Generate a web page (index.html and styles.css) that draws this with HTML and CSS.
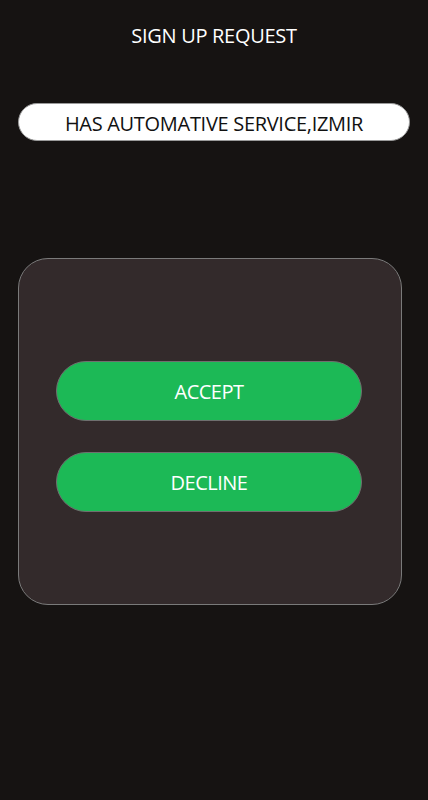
FILE: index.html
```html
<!DOCTYPE html>
<html>
<head>
<meta charset="utf-8">
<link rel="stylesheet" href="styles.css">
</head>
<body>
<div class="screen">
  <h1 class="title">SIGN UP REQUEST</h1>
  <div class="field">HAS AUTOMATIVE SERVICE,IZMIR</div>
  <div class="card">
    <button class="btn">ACCEPT</button>
    <button class="btn">DECLINE</button>
  </div>
</div>
</body>
</html>
```
FILE: styles.css
```css
html, body {
  margin: 0;
  padding: 0;
  background: #161312;
}
body {
  font-family: "Open Sans", "Noto Sans", sans-serif;
  width: 428px;
  height: 800px;
}
.screen {
  display: flex;
  flex-direction: column;
  padding: 0 18px;
}
.title {
  margin: 22px 0 0;
  font-size: 20px;
  font-weight: 400;
  color: #ffffff;
  text-align: center;
  line-height: 28px;
  letter-spacing: -0.3px;
}
.field {
  margin-top: 53px;
  height: 38px;
  box-sizing: border-box;
  border: 1px solid #9a9a9a;
  border-radius: 19px;
  background: #ffffff;
  color: #111;
  font-size: 20px;
  line-height: 36px;
  padding-top: 2px;
  text-align: center;
  letter-spacing: -0.3px;
}
.card {
  margin-top: 117px;
  width: 384px;
  height: 347px;
  box-sizing: border-box;
  background: #332a2b;
  border: 1px solid #7a7a7a;
  border-radius: 30px;
  display: flex;
  flex-direction: column;
  align-items: center;
  padding: 102px 0 0 0;
  gap: 31px;
}
.btn {
  width: 306px;
  height: 60px;
  margin-left: -2px;
  background: #1cb956;
  border: 1px solid #6f6f6f;
  border-radius: 30px;
  color: #ffffff;
  font-family: "Open Sans", "Noto Sans", sans-serif;
  font-size: 20px;
  letter-spacing: -0.5px;
  padding: 0;
}
```
